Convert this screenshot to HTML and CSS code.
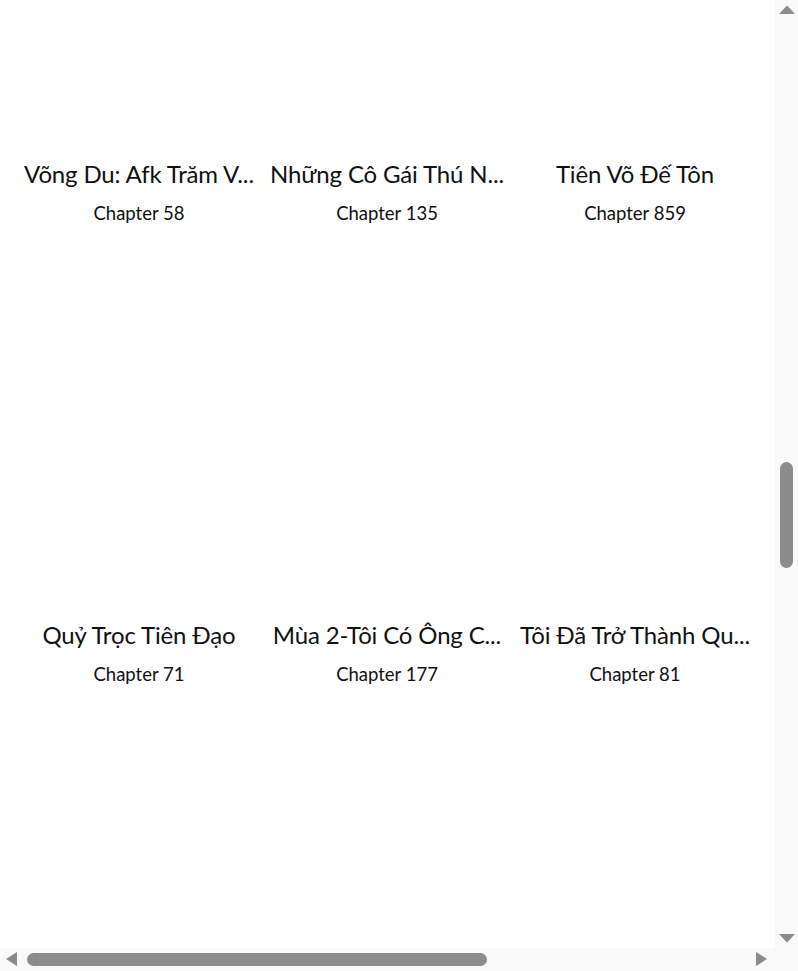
FILE: index.html
```html
<!DOCTYPE html>
<html lang="vi">
<head>
<meta charset="utf-8">
<title>Truyện</title>
<link rel="stylesheet" href="styles.css">
</head>
<body>
<div class="window">
  <main class="viewport" id="viewport">
    <section class="grid">
      <article class="card">
        <div class="thumb"></div>
        <h3 class="title">Võng Du: Afk Trăm V...</h3>
        <p class="chapter">Chapter 58</p>
      </article>
      <article class="card">
        <div class="thumb"></div>
        <h3 class="title">Những Cô Gái Thú N...</h3>
        <p class="chapter">Chapter 135</p>
      </article>
      <article class="card">
        <div class="thumb"></div>
        <h3 class="title">Tiên Võ Đế Tôn</h3>
        <p class="chapter">Chapter 859</p>
      </article>
      <article class="card">
        <div class="thumb"></div>
        <h3 class="title">Quỷ Trọc Tiên Đạo</h3>
        <p class="chapter">Chapter 71</p>
      </article>
      <article class="card">
        <div class="thumb"></div>
        <h3 class="title">Mùa 2-Tôi Có Ông C...</h3>
        <p class="chapter">Chapter 177</p>
      </article>
      <article class="card">
        <div class="thumb"></div>
        <h3 class="title">Tôi Đã Trở Thành Qu...</h3>
        <p class="chapter">Chapter 81</p>
      </article>
    </section>
  </main>
  <div class="vbar" aria-hidden="true">
    <svg class="arrow" width="23" height="20" viewBox="0 0 23 20"><path d="M4 14 L12 5.5 L20 14 Z" fill="#8b8b8b"/></svg>
    <div class="vtrack"><div class="vthumb"></div></div>
    <svg class="arrow" width="23" height="20" viewBox="0 0 23 20"><path d="M4 6 L12 14.5 L20 6 Z" fill="#8b8b8b"/></svg>
  </div>
  <div class="hbar" aria-hidden="true">
    <svg class="arrow" width="22" height="23" viewBox="0 0 22 23"><path d="M17 4 L6 11 L17 18 Z" fill="#8b8b8b"/></svg>
    <div class="htrack"><div class="hthumb"></div></div>
    <svg class="arrow" width="22" height="23" viewBox="0 0 22 23"><path d="M3 4 L14 11 L3 18 Z" fill="#8b8b8b"/></svg>
  </div>
  <div class="corner" aria-hidden="true"></div>
</div>
<script src="script.js"></script>
</body>
</html>
```
FILE: styles.css
```css
html, body {
  margin: 0;
  padding: 0;
  background: #ffffff;
}
body {
  font-family: "Lato", "Noto Sans", sans-serif;
  color: #111111;
}
.window {
  display: grid;
  grid-template-columns: 775px 23px;
  grid-template-rows: 948px 23px;
  width: 798px;
  height: 971px;
  overflow: hidden;
}
.viewport {
  overflow: hidden;
  background: #ffffff;
}
.grid {
  display: grid;
  grid-template-columns: repeat(3, 234px);
  column-gap: 14px;
  row-gap: 20px;
  padding: 0 0 420px 22px;
}
.card {
  display: flex;
  flex-direction: column;
  align-items: center;
  text-align: center;
  min-width: 0;
}
.thumb {
  align-self: stretch;
  height: 366px;
  margin-bottom: 4px;
}
.title {
  margin: 0;
  font-size: 24px;
  font-weight: 400;
  line-height: 36px;
  letter-spacing: -0.15px;
  white-space: nowrap;
}
.chapter {
  margin: 7px 0 0;
  font-size: 18.5px;
  line-height: 28px;
}
/* scrollbars */
.vbar {
  display: flex;
  flex-direction: column;
  background: #f9f9f9;
}
.vtrack {
  flex: 1;
  display: flex;
  flex-direction: column;
  padding: 442px 0 0 5px;
}
.vthumb {
  width: 13px;
  height: 106px;
  border-radius: 7px;
  background: #8c8c8c;
}
.hbar {
  display: flex;
  align-items: stretch;
  background: #f9f9f9;
}
.htrack {
  flex: 1;
  display: flex;
  padding: 5px 0 0 5px;
}
.hthumb {
  width: 460px;
  height: 13px;
  border-radius: 7px;
  background: #8c8c8c;
}
.arrow {
  display: block;
  flex: none;
}
.corner {
  background: #f9f9f9;
}
```
FILE: script.js
```js
(function () {
  var vp = document.getElementById('viewport');
  var t = vp.querySelector('.title');
  var offset = t.getBoundingClientRect().top - vp.getBoundingClientRect().top;
  vp.scrollTop = offset - 156;
})();
```
